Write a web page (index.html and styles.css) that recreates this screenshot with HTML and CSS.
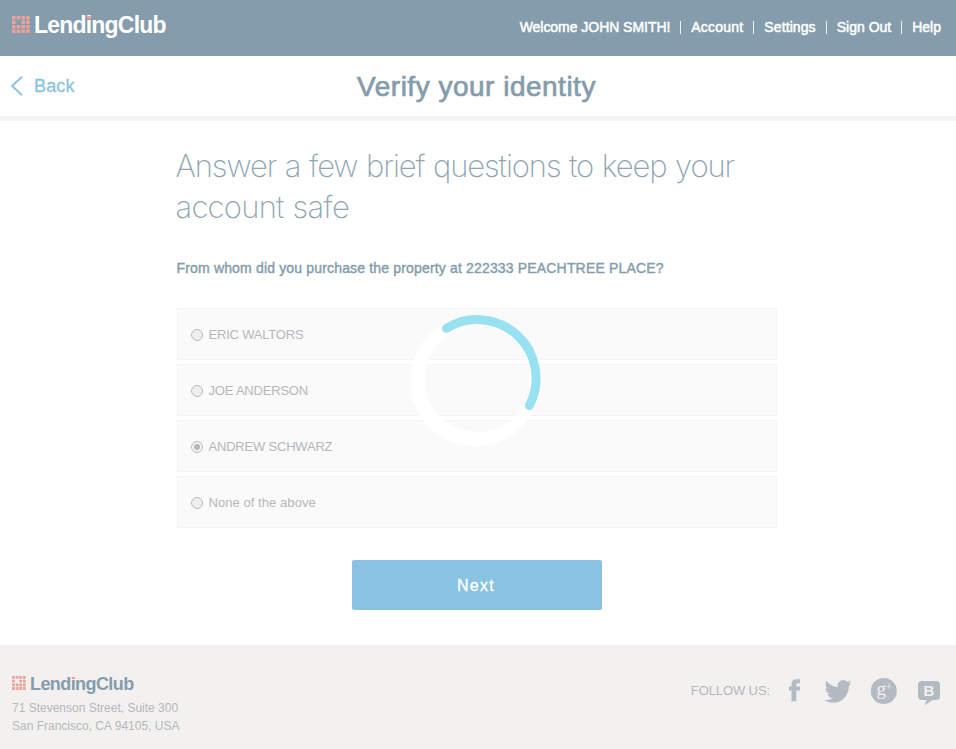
FILE: index.html
```html
<!DOCTYPE html>
<html lang="en">
<head>
<meta charset="utf-8">
<title>Verify your identity</title>
<link rel="stylesheet" href="styles.css">
</head>
<body>
<svg class="defs" width="0" height="0">
  <symbol id="mark" viewBox="0 0 18 17" preserveAspectRatio="none">
    <path fill="none" stroke="#eaa29b" stroke-width="3.4" stroke-dasharray="3.6 1.1" d="M0 1.7h18M0 6.200h3.600M9.400 6.200h8.600M0 10.700h18M0 15.200h18"/>
  </symbol>
</svg>
<header class="topbar">
  <div class="brand"><svg class="mark"><use href="#mark"/></svg><span class="wordmark">Lend<span class="dot">i</span>ngClub</span></div>
  <nav class="account">
    <span class="welcome">Welcome JOHN SMITH!</span><i></i><a class="n1">Account</a><i></i><a class="n2">Settings</a><i></i><a>Sign Out</a><i></i><a>Help</a>
  </nav>
</header>
<div class="titlebar">
  <a class="back"><svg width="12" height="20" viewBox="0 0 12 20"><path d="M11 .8 1.2 10 11 19.2" fill="none" stroke="#8ac3e2" stroke-width="1.9"/></svg><span>Back</span></a>
  <h1>Verify your identity</h1>
</div>
<main>
  <h2><span class="l1">Answer a few brief questions to keep your</span><br><span class="l2">account safe</span></h2>
  <p class="question">From whom did you purchase the property at 222333 PEACHTREE PLACE?</p>
  <div class="options">
    <label><span class="radio"></span><span class="caps">ERIC WALTORS</span></label>
    <label><span class="radio"></span><span class="caps">JOE ANDERSON</span></label>
    <label><span class="radio on"></span><span class="caps">ANDREW SCHWARZ</span></label>
    <label><span class="radio"></span><span class="mixed">None of the above</span></label>
    <svg class="spinner" width="132" height="132" viewBox="411 315 132 132">
      <path fill="#fff" fill-rule="evenodd" d="M411 381a65.4 65.4 0 1 0 130.8 0a65.4 65.4 0 1 0-130.8 0zM425.5 379a53 53 0 1 0 106 0a53 53 0 1 0-106 0z"/>
      <path d="M447.5 328.3A58.8 58.8 0 0 1 530.4 405.6" fill="none" stroke="#97e1f1" stroke-width="9" stroke-linecap="round"/>
    </svg>
  </div>
  <button>Next</button>
</main>
<footer>
  <div class="company">
    <div class="brand small"><svg class="mark"><use href="#mark"/></svg><span class="wordmark">Lend<span class="dot">i</span>ngClub</span></div>
    <address>71 Stevenson Street, Suite 300<br>San Francisco, CA 94105, USA</address>
  </div>
  <div class="follow">
    <span>FOLLOW US:</span>
    <svg width="154" height="30" viewBox="787 676 154 30" fill="#b4bac2">
      <path d="M791.5 701.200v-10.800H789v-4h2.500v-2c0-3.500 1.900-5.200 5-5.200h3.600v4.100h-2.200c-1.200 0-1.600.6-1.600 1.700v1.400h3.700v4h-3.700v10.800z"/>
      <path transform="translate(824.5 677.4) scale(1.13 1.17)" d="M23.953 4.57a10 10 0 01-2.825.775 4.958 4.958 0 002.163-2.723c-.951.555-2.005.959-3.127 1.184a4.92 4.92 0 00-8.384 4.482C7.69 8.095 4.067 6.13 1.64 3.162a4.822 4.822 0 00-.666 2.475c0 1.71.87 3.213 2.188 4.096a4.904 4.904 0 01-2.228-.616v.06a4.923 4.923 0 003.946 4.827 4.996 4.996 0 01-2.212.085 4.936 4.936 0 004.604 3.417 9.867 9.867 0 01-6.102 2.105c-.39 0-.779-.023-1.17-.067a13.995 13.995 0 007.557 2.209c9.053 0 13.998-7.496 13.998-13.985 0-.21 0-.42-.015-.63A9.935 9.935 0 0024 4.59z"/>
      <circle cx="883.8" cy="691" r="13"/>
      <path d="M922 681h14a4 4 0 0 1 4 4v11a4 4 0 0 1-4 4h-3.500l-8 5.500 2.300-5.500H922a4 4 0 0 1-4-4v-11a4 4 0 0 1 4-4z"/>
      <text x="876.500" y="695" class="g">g</text><text x="885.500" y="691" class="plus">+</text>
      <text x="923.500" y="696" class="b">B</text>
    </svg>
  </div>
</footer>
</body>
</html>
```
FILE: styles.css
```css
* { box-sizing: border-box; }
body { margin: 0; height: 749px; overflow: hidden; display: flex; flex-direction: column; background: #fff; font-family: "Liberation Sans", Arial, sans-serif; color: #849cab; }
.defs { position: absolute; }
h1, h2, p { margin: 0; font-weight: 400; }
.topbar { height: 56px; flex: none; background: #849cab; color: #fff; display: flex; justify-content: space-between; padding: 0 15px 0 12px; }
.brand { display: flex; }
.brand .mark { width: 18px; height: 17px; margin-top: 16px; }
.wordmark { font-weight: 700; font-size: 23px; line-height: 26px; letter-spacing: -.8px; margin: 12px 0 0 4px; }
.dot { position: relative; }
.dot::after { content: ""; position: absolute; left: .06em; top: .17em; width: .16em; height: .13em; background: #eaa29b; }
.account { display: flex; align-items: center; font-size: 14px; line-height: 16px; -webkit-text-stroke: .5px #fff; height: 54px; }
.account i { width: 1px; height: 13px; background: #eef2f4; margin: 0 10px; }
.n1 { letter-spacing: .2px; }
.n2 { letter-spacing: .1px; }
.welcome { letter-spacing: -.04px; }
.titlebar { height: 65px; flex: none; border-bottom: 5px solid #f4f4f4; display: grid; grid-template-columns: 1fr auto 1fr; align-items: center; padding: 0 14px 0 11px; }
.titlebar h1 { font-size: 28px; line-height: 34px; letter-spacing: .5px; padding-top: 1px; -webkit-text-stroke: .7px #849cab; }
.back { display: flex; align-items: center; gap: 11px; color: #8ac3e2; font-size: 18px; letter-spacing: .15px; -webkit-text-stroke: .3px #8ac3e2; }
main { width: 600.5px; margin: 24px 0 0 176.5px; flex: 1; }
h2 { font-family: Inter, sans-serif; font-weight: 200; font-size: 31px; line-height: 41px; white-space: nowrap; color: #8fa5b3; margin-left: -1px; }
.l1 { letter-spacing: -1.08px; word-spacing: .9px; }
.l2 { letter-spacing: -.75px; word-spacing: .9px; }
.question { font-size: 14px; line-height: 20px; margin: 31px 0 30px; white-space: nowrap; letter-spacing: .165px; -webkit-text-stroke: .4px #849cab; }
.options { position: relative; display: grid; gap: 4px; color: #b5b8bb; font-size: 13px; }
.options label { height: 52px; background: #fafafa; border: 1px solid #f4f4f4; display: flex; align-items: center; padding-left: 13px; }
.caps { letter-spacing: -.2px; }
.mixed { letter-spacing: .06px; }
.radio { width: 12px; height: 12px; border: 1px solid #bbb; border-radius: 50%; background: #eee; margin: 1px 6px 0 0; }
.radio.on { background: radial-gradient(circle, #b8b8b8 0 2.7px, #f4f4f4 3.4px); }
.spinner { position: absolute; left: 233.5px; top: 7px; }
button { display: block; width: 250px; height: 50px; margin: 32px 0 0 175.5px; padding: 2px 2px 0 0; border: 0; border-radius: 2px; background: #8ac3e2; color: #fff; font: 16px "Liberation Sans", sans-serif; letter-spacing: 1.3px; -webkit-text-stroke: .3px #fff; }
footer { height: 104px; flex: none; background: #f2f1f0; display: flex; justify-content: space-between; padding: 0 15px 0 12px; }
.small .mark { width: 14px; height: 14px; margin-top: 31px; }
.small .wordmark { font-size: 18px; line-height: 22px; margin: 28px 0 0 4px; letter-spacing: -.58px; }
address { font-style: normal; font-size: 12px; line-height: 18px; color: #b5b8bb; margin-top: 4px; white-space: nowrap; }
.follow { display: flex; gap: 17px; padding-top: 31px; font-size: 13px; line-height: 30px; letter-spacing: -.1px; color: #b5b8bb; }
.follow text { fill: #f2f1f0; }
.g { font: 19px "Liberation Serif", serif; }
.plus { font: 12px "Liberation Serif", serif; }
.b { font: 700 15px "Liberation Sans", sans-serif; }
```
